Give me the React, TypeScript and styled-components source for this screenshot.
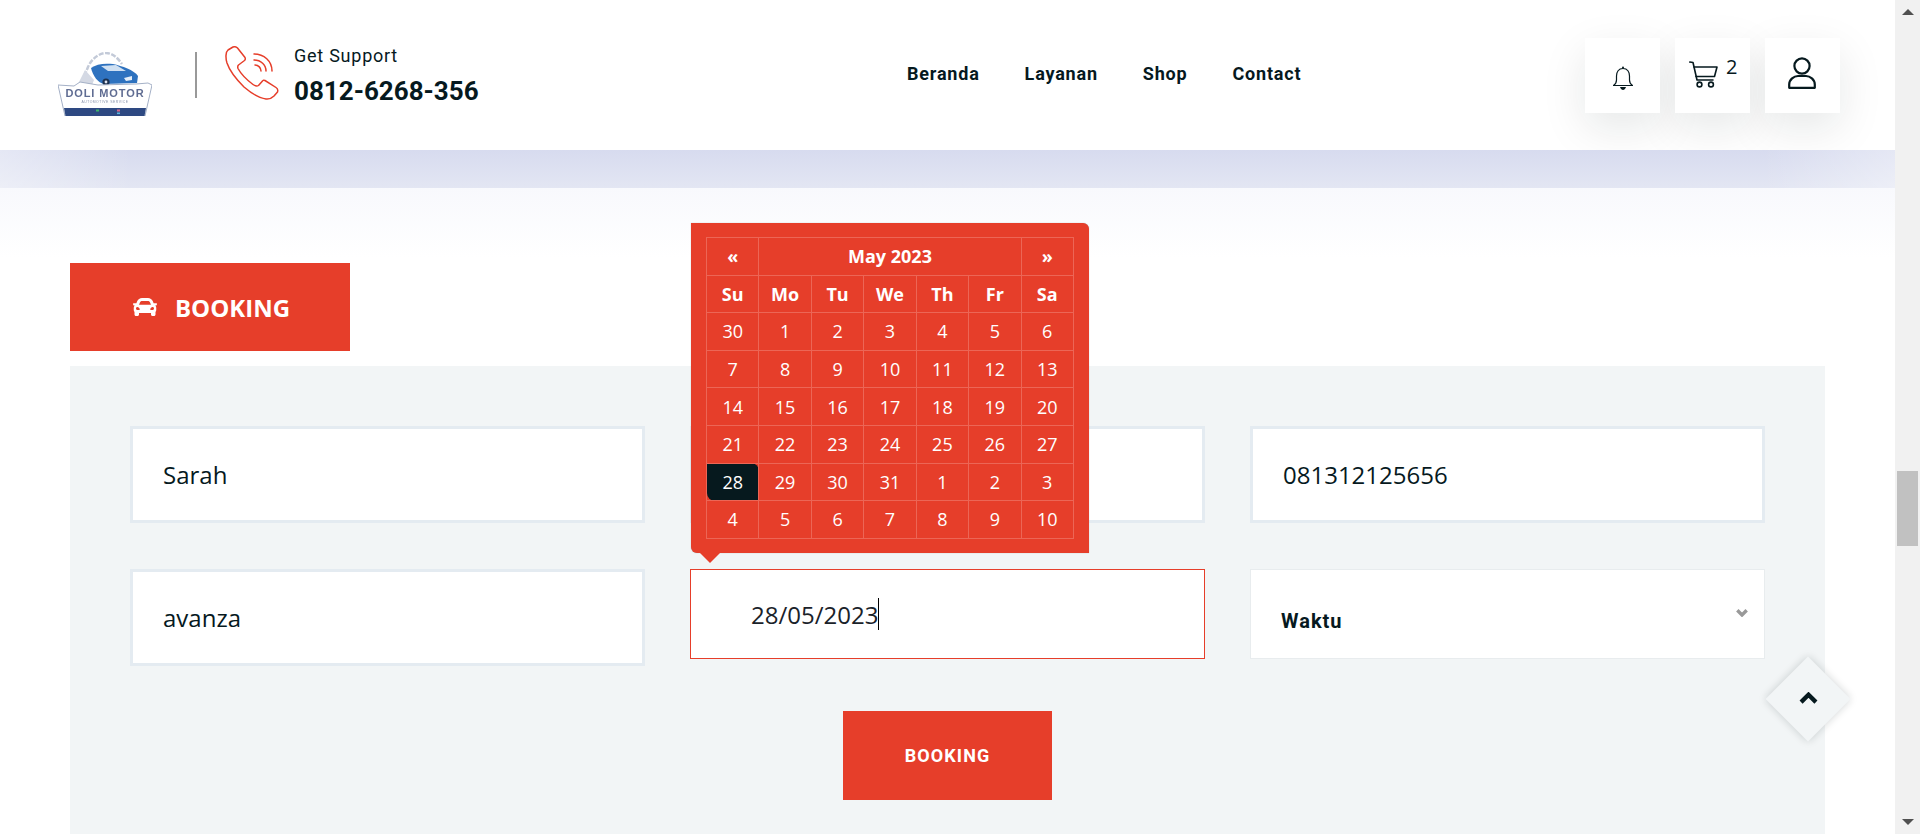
import React from "react";
import styled, { createGlobalStyle } from "styled-components";
import { FaCar } from "react-icons/fa";

const RED = "#e63e2a";
const DARK = "#06191e";
const HEAD_FONT = `"Roboto", "Liberation Sans", sans-serif`;
const BODY_FONT = `"Open Sans", "Liberation Sans", sans-serif`;

const Global = createGlobalStyle`
  html, body {
    margin: 0;
    height: 834px;
    overflow: hidden;
    background: #fff;
  }
  * { box-sizing: border-box; }
  svg { flex: none; }
`;

const weeks = [
  ["30", "1", "2", "3", "4", "5", "6"],
  ["7", "8", "9", "10", "11", "12", "13"],
  ["14", "15", "16", "17", "18", "19", "20"],
  ["21", "22", "23", "24", "25", "26", "27"],
  ["28", "29", "30", "31", "1", "2", "3"],
  ["4", "5", "6", "7", "8", "9", "10"],
];
const dayNames = ["Su", "Mo", "Tu", "We", "Th", "Fr", "Sa"];
const navItems = ["Beranda", "Layanan", "Shop", "Contact"];

const Logo = () => (
  <LogoSvg viewBox="0 0 94 64">
    <defs>
      <filter id="soft">
        <feGaussianBlur stdDeviation="0.7" />
      </filter>
    </defs>
    <g filter="url(#soft)">
      <path d="M24 30 C26 24 28 20 30 15 C34 6 42 1 48 1 C54 1 60 6 64 12" fill="none" stroke="#c3cad8" strokeWidth="2.5" strokeDasharray="5 1.5" />
      <path d="M18 36 L27 18 L36 28 L32 38Z" fill="#d4d9e4" />
      <path d="M33 16 C38 12 46 11 55 12 C64 14 76 18 80 24 L79 31 L46 32 C40 31 35 24 33 16Z" fill="#2f72bf" />
      <path d="M43 14 L58 13 L68 19 L50 19Z" fill="#cfe0f2" />
      <path d="M66 26 L74 24 L74 28 L68 29Z" fill="#e4eef8" />
      <circle cx="48" cy="30" r="3.6" fill="#1e3050" />
      <circle cx="48" cy="30" r="1.4" fill="#dde3ee" />
      <path d="M0 33 L16 34 L22 30 L40 33 L78 32 L90 31 L94 33 L87 64 L7 64Z" fill="#fff" stroke="#a4b0c6" strokeWidth="1" />
      <text x="47" y="45" textAnchor="middle" fontFamily="Liberation Sans, sans-serif" fontWeight="700" fontSize="11" letterSpacing="0.9" fill="#5f6c92">
        DOLI MOTOR
      </text>
      <text x="47" y="51" textAnchor="middle" fontFamily="Liberation Sans, sans-serif" fontSize="3.4" letterSpacing="0.5" fill="#8a94ac">
        AUTOMOTIVE SERVICE
      </text>
      <path d="M6 56 L88 56 L86.5 64 L7.5 64Z" fill="#2e4a82" />
      <rect x="38" y="57.5" width="3" height="2" fill="#3fb56a" />
      <rect x="59" y="57.5" width="3" height="2" fill="#d8668c" />
      <rect x="59" y="60.5" width="3" height="1.6" fill="#58b6e0" />
    </g>
  </LogoSvg>
);

const PhoneIcon = () => (
  <svg width="54" height="55" viewBox="0 0 54 55" fill="none" stroke={RED} strokeWidth="1.5" strokeLinecap="round" strokeLinejoin="round">
    <path d="M8 1 L3 4 C0.5 6 0.5 12 2 17 C5 26 12 34 19 41 C26 47 33 52 41 53 C45 53.5 47 52 49 50 L52.5 46 C53 44.5 52.5 42.5 51 41.5 L40 34.5 C39 34 38 34 37.5 35 L33.5 39.5 C32 40.5 30 40 28 38.5 C22 34 16 28 13 22.5 C12.5 21 12.5 20 13.5 19 L19.5 14.5 C20.5 13.5 20.5 12.5 20 11.5 L12.5 2 C11 0.5 9.5 0.5 8 1Z" />
    <path d="M29 8 C39 8 47 15 47 25" />
    <path d="M29 14 C36 14 41 19 41 25" />
    <path d="M30 19 C33.5 19 36 22 36 25" />
  </svg>
);

const BellIcon = () => (
  <svg width="20" height="24" viewBox="0 0 20 24" fill="none" stroke={DARK} strokeWidth="1.2">
    <path d="M10 2.5 C5.5 2.5 3.5 6 3.5 10 L3.5 14 C3.5 17 2 18.5 0.5 19.5 L19.5 19.5 C18 18.5 16.5 17 16.5 14 L16.5 10 C16.5 6 14.5 2.5 10 2.5Z" />
    <circle cx="10" cy="1.6" r="1" fill={DARK} stroke="none" />
    <path d="M7 21 L13 21 C12.5 23 11 24 10 24 C9 24 7.5 23 7 21Z" fill={DARK} stroke="none" />
  </svg>
);

const CartIcon = () => (
  <svg width="29" height="27" viewBox="0 0 29 27" fill="none" stroke={DARK} strokeWidth="1.6" strokeLinecap="round" strokeLinejoin="round">
    <path d="M0.8 1 L4 1.5 L8 19 L24 19" />
    <path d="M5 6 L28 6 L25.5 15.5 L7 15.5" />
    <circle cx="10.5" cy="23.5" r="2.4" />
    <circle cx="22" cy="23.5" r="2.4" />
  </svg>
);

const UserIcon = () => (
  <svg width="28" height="32" viewBox="0 0 28 32" fill="none" stroke={DARK} strokeWidth="2.2" strokeLinejoin="round">
    <circle cx="14" cy="9" r="7.6" />
    <path d="M1.2 30.8 L1.2 27.5 C1.2 22.5 6 19 10 19 L18 19 C22 19 26.8 22.5 26.8 27.5 L26.8 30.8Z" />
  </svg>
);

const Chevron = ({ size, color, weight, up }: { size: number; color: string; weight: number; up?: boolean }) => (
  <svg width={size} height={size * 0.64} viewBox="0 0 14 9" fill="none" stroke={color} strokeWidth={weight}>
    <path d={up ? "M1.5 7.5 L7 2 L12.5 7.5" : "M1.5 1.5 L7 7 L12.5 1.5"} />
  </svg>
);

const App: React.FC = () => (
  <Page>
    <Global />
    <Main>
      <Header>
        <Brand>
          <Logo />
          <Divider />
          <PhoneIcon />
          <Support>
            <SupportLabel>Get Support</SupportLabel>
            <SupportNumber>0812-6268-356</SupportNumber>
          </Support>
        </Brand>
        <Nav>
          {navItems.map((item) => (
            <NavLink key={item}>{item}</NavLink>
          ))}
        </Nav>
        <Actions>
          <ActionButton $pad="4px">
            <BellIcon />
          </ActionButton>
          <ActionButton $pad="0">
            <CartShift>
              <CartIcon />
            </CartShift>
            <CartCount>2</CartCount>
          </ActionButton>
          <ActionButton $pad="0">
            <UserShift>
              <UserIcon />
            </UserShift>
          </ActionButton>
        </Actions>
      </Header>
      <Band />
      <Content>
        <SectionTab>
          <FaCar size={24} />
          BOOKING
        </SectionTab>
        <Panel>
          <FormGrid>
            <TextField>Sarah</TextField>
            <TextField>&nbsp;</TextField>
            <TextField>081312125656</TextField>
            <TextField>avanza</TextField>
            <DateField>
              28/05/2023
              <Caret />
              <Calendar>
                <CalendarTable>
                  <tbody>
                    <tr>
                      <HeadCell>«</HeadCell>
                      <HeadCell colSpan={5}>May 2023</HeadCell>
                      <HeadCell>»</HeadCell>
                    </tr>
                    <tr>
                      {dayNames.map((d) => (
                        <HeadCell key={d}>{d}</HeadCell>
                      ))}
                    </tr>
                    {weeks.map((week, i) => (
                      <tr key={i}>
                        {week.map((d, j) => (
                          <DayCell key={j} $active={i === 4 && j === 0}>
                            {d}
                          </DayCell>
                        ))}
                      </tr>
                    ))}
                  </tbody>
                </CalendarTable>
                <CalendarPointer />
              </Calendar>
            </DateField>
            <SelectField>
              Waktu
              <SelectArrow>
                <Chevron size={12} color="#999" weight={4} />
              </SelectArrow>
            </SelectField>
          </FormGrid>
          <SubmitRow>
            <SubmitButton>BOOKING</SubmitButton>
          </SubmitRow>
        </Panel>
        <ScrollTop>
          <ScrollTopInner>
            <Chevron size={19} color={DARK} weight={3.2} up />
          </ScrollTopInner>
        </ScrollTop>
      </Content>
    </Main>
    <ScrollBar>
      <ScrollArrowUp />
      <ScrollThumb />
      <ScrollArrowDown />
    </ScrollBar>
  </Page>
);

const Page = styled.div`
  display: flex;
  width: 1920px;
  height: 834px;
  overflow: hidden;
`;
const Main = styled.div`
  flex: 1;
  min-width: 0;
  display: flex;
  flex-direction: column;
`;
const Header = styled.header`
  height: 150px;
  flex: none;
  display: flex;
  align-items: flex-start;
  padding: 38px 55px 0 58px;
  background: #fff;
  overflow: hidden;
`;
const Brand = styled.div`
  width: 419px;
  flex: none;
  display: flex;
  align-items: flex-start;
  margin-top: 8px;
`;
const LogoSvg = styled.svg`
  width: 94px;
  height: 64px;
  margin-top: 6px;
  flex: none;
`;
const Divider = styled.div`
  width: 2px;
  height: 46px;
  background: #999;
  margin: 6px 28px 0 43px;
  flex: none;
`;
const Support = styled.div`
  margin-left: 15px;
  display: flex;
  flex-direction: column;
  color: ${DARK};
  font-family: ${HEAD_FONT};
  white-space: nowrap;
`;
const SupportLabel = styled.span`
  font-size: 18px;
  line-height: 20px;
  letter-spacing: 0.75px;
`;
const SupportNumber = styled.span`
  font-size: 26px;
  line-height: 30px;
  font-weight: 700;
  margin-top: 10px;
`;
const Nav = styled.nav`
  margin: 24px 0 0 430px;
  display: flex;
  gap: 45px;
`;
const NavLink = styled.a`
  font-family: ${HEAD_FONT};
  font-size: 18px;
  line-height: 24px;
  font-weight: 700;
  letter-spacing: 0.8px;
  color: ${DARK};
`;
const Actions = styled.div`
  margin-left: auto;
  display: flex;
  gap: 15px;
  isolation: isolate;
`;
const ActionButton = styled.div<{ $pad: string }>`
  position: relative;
  width: 75px;
  height: 75px;
  padding-top: ${(p) => p.$pad};
  background: #fff;
  display: flex;
  align-items: center;
  justify-content: center;
  &::before {
    content: "";
    position: absolute;
    inset: 0;
    z-index: -1;
    box-shadow: 0 15px 45px rgba(6, 25, 30, 0.1);
  }
`;
const CartShift = styled.div`
  display: flex;
  margin: 0 18px 2px 0;
`;
const UserShift = styled.div`
  display: flex;
  margin: 0 2px 5px 0;
`;
const CartCount = styled.span`
  position: absolute;
  top: 16px;
  left: 51px;
  font-family: ${BODY_FONT};
  font-size: 20px;
  line-height: 26px;
  color: ${DARK};
`;
const Band = styled.div`
  height: 38px;
  flex: none;
  background: linear-gradient(to right, rgba(255, 255, 255, 0.35), transparent 7%, transparent 93%, rgba(255, 255, 255, 0.35)),
    linear-gradient(#d7dbef, #e3e6f3);
`;
const Content = styled.main`
  position: relative;
  flex: 1;
  min-height: 0;
  padding: 75px 70px 0;
  background: linear-gradient(#f8f9fd, #fff 70px);
`;
const SectionTab = styled.div`
  width: 280px;
  height: 88px;
  padding-left: 3px;
  background: ${RED};
  color: #fff;
  display: flex;
  align-items: center;
  justify-content: center;
  gap: 18px;
  font-family: ${BODY_FONT};
  font-size: 24px;
  font-weight: 700;
`;
const Panel = styled.section`
  margin-top: 15px;
  height: 500px;
  padding: 60px;
  background: #f2f5f6;
`;
const FormGrid = styled.div`
  display: grid;
  grid-template-columns: repeat(3, 515px);
  column-gap: 45px;
  row-gap: 46px;
  align-items: start;
`;
const TextField = styled.div`
  height: 97px;
  padding: 0 29px 0 30px;
  background: #fff;
  border: 3px solid #e4ebf1;
  display: flex;
  align-items: center;
  font-family: ${BODY_FONT};
  font-size: 24px;
  font-weight: 500;
  color: ${DARK};
`;
const DateField = styled.div`
  position: relative;
  height: 90px;
  padding: 0 0 0 60px;
  background: #fff;
  border: 1px solid ${RED};
  display: flex;
  align-items: center;
  font-family: ${BODY_FONT};
  font-size: 24px;
  font-weight: 500;
  color: #1a2229;
`;
const Caret = styled.span`
  width: 1px;
  height: 32px;
  background: #000;
`;
const Calendar = styled.div`
  position: absolute;
  left: 0;
  bottom: calc(100% + 17px);
  width: 398px;
  height: 330px;
  padding: 14px 15px 0;
  background: ${RED};
  border-radius: 0 6px 0 6px;
  box-shadow: 0 0 1px rgba(6, 25, 30, 0.4);
  color: #fff;
  font-family: ${BODY_FONT};
  font-size: 18px;
  font-weight: 400;
`;
const CalendarTable = styled.table`
  width: 368px;
  border-collapse: collapse;
  table-layout: fixed;
`;
const HeadCell = styled.td`
  height: 37.6px;
  padding: 0;
  border: 1px solid #ec6656;
  text-align: center;
  font-weight: 700;
`;
const DayCell = styled.td<{ $active: boolean }>`
  height: 37.6px;
  padding: 0;
  border: 1px solid #ec6656;
  text-align: center;
  background: ${(p) => (p.$active ? DARK : "transparent")};
  border-radius: ${(p) => (p.$active ? "0 8px 0 8px" : "0")};
`;
const CalendarPointer = styled.div`
  position: absolute;
  left: 9px;
  top: 100%;
  border-left: 10px solid transparent;
  border-right: 10px solid transparent;
  border-top: 10px solid ${RED};
`;
const SelectField = styled.div`
  position: relative;
  height: 90px;
  padding: 14px 0 0 30px;
  background: #fff;
  border: 1px solid #e8ecee;
  display: flex;
  align-items: center;
  font-family: ${HEAD_FONT};
  font-size: 20px;
  font-weight: 700;
  letter-spacing: 1px;
  color: ${DARK};
`;
const SelectArrow = styled.span`
  position: absolute;
  right: 16px;
  top: 39px;
  display: flex;
`;
const SubmitRow = styled.div`
  display: flex;
  justify-content: center;
  margin: 45px 0 0;
`;
const SubmitButton = styled.div`
  width: 209px;
  height: 89px;
  background: ${RED};
  color: #fff;
  display: flex;
  align-items: center;
  justify-content: center;
  font-family: ${HEAD_FONT};
  font-size: 18px;
  font-weight: 700;
  letter-spacing: 1.1px;
`;
const ScrollTop = styled.div`
  position: absolute;
  left: 1778px;
  top: 481px;
  width: 60px;
  height: 60px;
  background: #f2f5f6;
  transform: rotate(45deg);
  box-shadow: 0 0 8px rgba(6, 25, 30, 0.18);
`;
const ScrollTopInner = styled.div`
  width: 100%;
  height: 100%;
  padding-bottom: 2px;
  display: flex;
  align-items: center;
  justify-content: center;
  transform: rotate(-45deg);
`;
const ScrollBar = styled.aside`
  position: relative;
  width: 25px;
  flex: none;
  background: #f1f1f1;
  padding: 471px 2px 0;
`;
const ScrollThumb = styled.div`
  height: 75px;
  background: #c1c1c1;
`;
const ScrollArrowUp = styled.div`
  position: absolute;
  top: 9px;
  left: 7px;
  border-left: 6px solid transparent;
  border-right: 6px solid transparent;
  border-bottom: 6px solid #505050;
`;
const ScrollArrowDown = styled.div`
  position: absolute;
  bottom: 9px;
  left: 7px;
  border-left: 6px solid transparent;
  border-right: 6px solid transparent;
  border-top: 6px solid #505050;
`;

export default App;
